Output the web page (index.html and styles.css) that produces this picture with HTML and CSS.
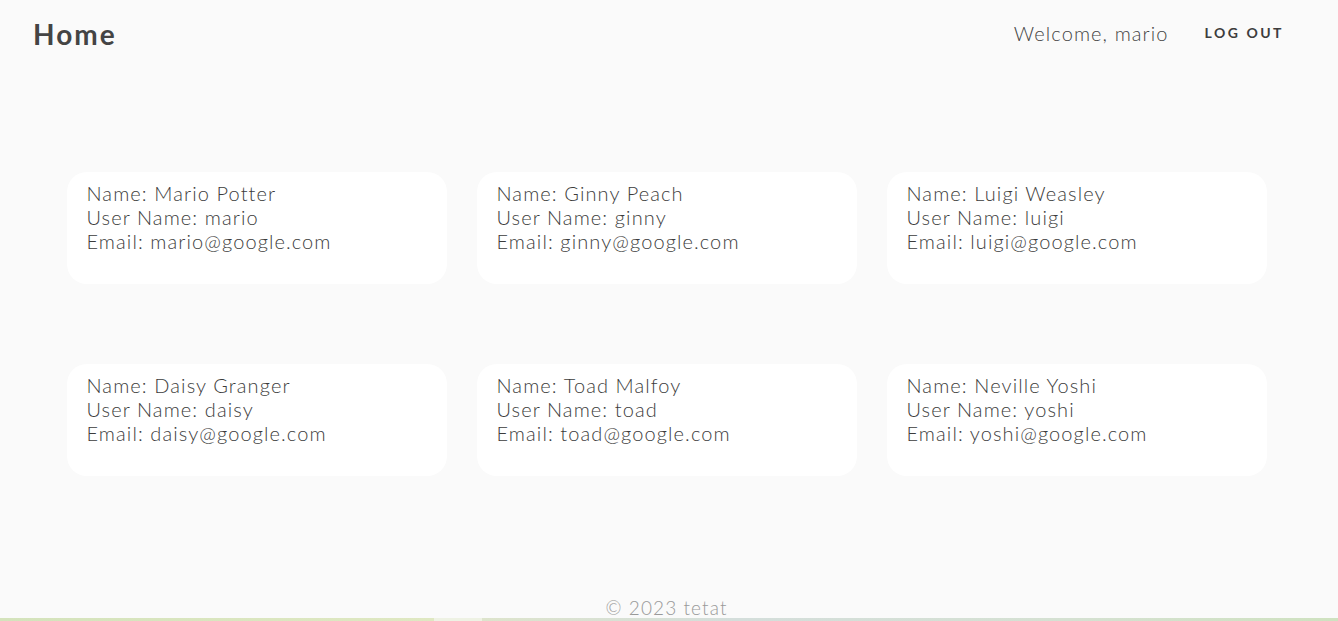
FILE: index.html
```html
<!DOCTYPE html>
<html lang="en">
<head>
<meta charset="utf-8">
<title>Home</title>
<link rel="stylesheet" href="styles.css">
</head>
<body>
<div class="page">
  <header class="topbar">
    <h1 class="title">Home</h1>
    <nav class="nav">
      <span class="welcome">Welcome, mario</span>
      <button class="logout">LOG OUT</button>
    </nav>
  </header>
  <main class="cards">
    <div class="card"><div>Name: Mario Potter</div><div>User Name: mario</div><div>Email: mario@google.com</div></div>
    <div class="card"><div>Name: Ginny Peach</div><div>User Name: ginny</div><div>Email: ginny@google.com</div></div>
    <div class="card"><div>Name: Luigi Weasley</div><div>User Name: luigi</div><div>Email: luigi@google.com</div></div>
    <div class="card"><div>Name: Daisy Granger</div><div>User Name: daisy</div><div>Email: daisy@google.com</div></div>
    <div class="card"><div>Name: Toad Malfoy</div><div>User Name: toad</div><div>Email: toad@google.com</div></div>
    <div class="card"><div>Name: Neville Yoshi</div><div>User Name: yoshi</div><div>Email: yoshi@google.com</div></div>
  </main>
  <footer class="footer">© 2023 tetat</footer>
  <div class="strip"></div>
</div>
</body>
</html>
```
FILE: styles.css
```css
* { box-sizing: border-box; }
html, body {
  margin: 0;
  background: #fafafa;
  font-family: "Lato", "Noto Sans", sans-serif;
  color: #4a4a4a;
}
.page {
  display: flex;
  flex-direction: column;
}
.topbar {
  display: flex;
  justify-content: space-between;
  align-items: center;
  height: 68px;
  padding: 0 54px 0 33px;
}
.title {
  margin: 0;
  font-size: 28px;
  font-weight: 700;
  color: #444;
  letter-spacing: 2px;
}
.nav {
  display: flex;
  align-items: center;
  gap: 36px;
  margin-top: -3px;
}
.welcome {
  font-size: 20px;
  font-weight: 300;
  color: #444;
  letter-spacing: 1.1px;
}
.logout {
  border: none;
  background: none;
  padding: 0;
  font-family: inherit;
  font-size: 14px;
  font-weight: 700;
  letter-spacing: 2.5px;
  color: #3d3d3d;
  cursor: pointer;
}
.cards {
  display: grid;
  grid-template-columns: repeat(3, 380px);
  column-gap: 30px;
  row-gap: 80px;
  justify-content: center;
  padding: 104px 0 0 0;
  margin-left: -5px;
}
.card {
  background: #fff;
  border-radius: 20px;
  padding: 9px 20px 30px;
  height: 112px;
  font-size: 20px;
  line-height: 24px;
  font-weight: 300;
  color: #3c3c3c;
  letter-spacing: 1.1px;
}
.footer {
  margin-top: 122px;
  text-align: center;
  font-size: 19px;
  line-height: 20px;
  font-weight: 300;
  color: #999;
  letter-spacing: 1.1px;
  margin-left: -5px;
}
.strip {
  height: 6px;
  background: linear-gradient(90deg, #d4e3bc 0%, #dfe8c2 32.4%, #eef2e4 32.4%, #eef2e4 36%, #dde4cc 36%, #d4dedb 55%, #d5e1d2 80%, #cfe2c0 100%);
}
```
